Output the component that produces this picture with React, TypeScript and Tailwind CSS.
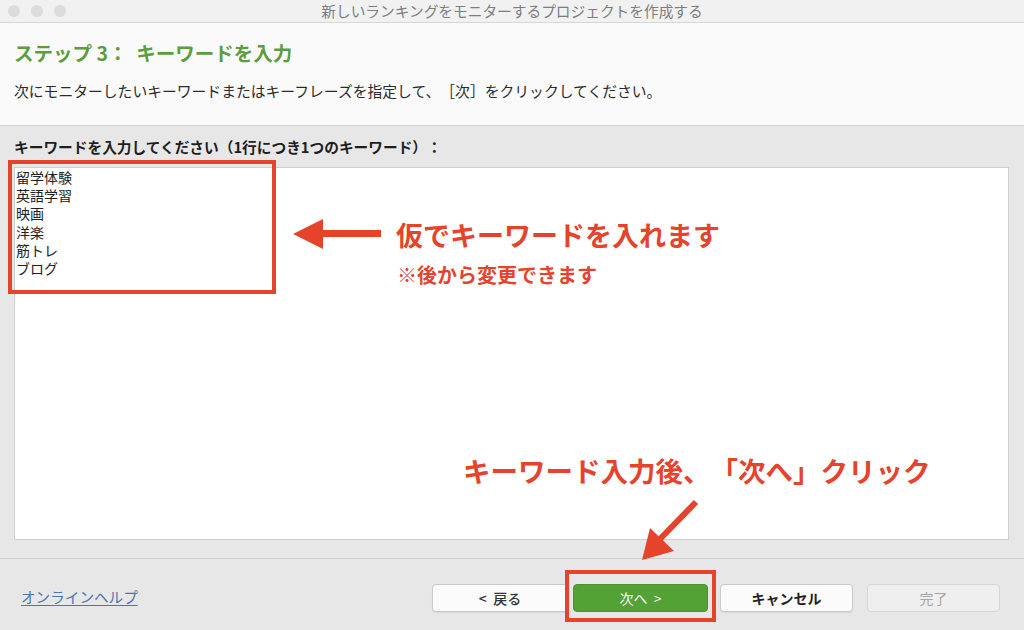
import React from "react";

const FONT = '"Noto Sans CJK JP", "Noto Sans", sans-serif';

export default function App() {
  const keywords = ["留学体験", "英語学習", "映画", "洋楽", "筋トレ", "ブログ"];
  return (
    <div
      className="relative w-[1024px] h-[630px] overflow-hidden bg-[#e7e7e7] flex flex-col text-[#222] [text-spacing-trim:space-all]"
      style={{ fontFamily: FONT }}
    >
      {/* Title bar */}
      <div className="relative h-[23px] bg-[#f1f1f1] border-b border-[#d6d6d6] flex items-center shrink-0">
        <div className="flex gap-[11px] pl-[8px]">
          <span className="w-[12px] h-[12px] rounded-full bg-[#dcdcdc]" />
          <span className="w-[12px] h-[12px] rounded-full bg-[#dcdcdc]" />
          <span className="w-[12px] h-[12px] rounded-full bg-[#dcdcdc]" />
        </div>
        <div className="absolute inset-0 flex items-center justify-center text-[14.7px] text-[#7d7d7d] leading-none">
          新しいランキングをモニターするプロジェクトを作成する
        </div>
      </div>

      {/* Header */}
      <div className="h-[103px] bg-[#fafafa] border-b border-[#d3d3d3] px-[14px] pt-[17px] shrink-0">
        <div className="text-[19.5px] font-bold leading-[26px] text-[#5c9e3c] whitespace-pre">ステップ 3：  キーワードを入力</div>
        <div className="mt-[16px] text-[14.8px] leading-[18px] text-[#2a2a2a]">
          次にモニターしたいキーワードまたはキーフレーズを指定して、［次］をクリックしてください。
        </div>
      </div>

      {/* Middle */}
      <div className="h-[432px] pl-[14px] pr-[15px] pt-[12px] shrink-0">
        <div className="text-[14.7px] font-bold leading-[18px] text-[#1e1e1e]">
          キーワードを入力してください（1行につき1つのキーワード）：
        </div>
        <div className="mt-[11px] h-[373px] bg-white border border-[#cfcfcf] px-[1px] pt-0 text-[14px] leading-[18.2px] text-[#222]">
          {keywords.map((k) => (
            <div key={k}>{k}</div>
          ))}
        </div>
      </div>

      {/* Footer */}
      <div className="flex-1 border-t border-[#cdcdcd] flex items-start pt-[25px] pl-[21px] pr-[24px]">
        <a className="mt-[3px] text-[14.6px] leading-[20px] text-[#4a76ad] underline underline-offset-2 cursor-pointer">
          オンラインヘルプ
        </a>
        <button className="ml-auto w-[136px] h-[28px] rounded-[4px] bg-[#fbfbfb] border border-[#cacaca] shadow-[0_1px_1px_rgba(0,0,0,0.08)] text-[14px] text-[#333] font-medium">
          &lt;&nbsp;&nbsp;戻る
        </button>
        <button className="ml-[5px] w-[135px] h-[28px] rounded-[4px] bg-[#53a236] border border-[#4a9330] text-[14px] text-white">
          次へ&nbsp;&nbsp;&gt;
        </button>
        <button className="ml-[12px] w-[133px] h-[28px] rounded-[4px] bg-[#fbfbfb] border border-[#cacaca] shadow-[0_1px_1px_rgba(0,0,0,0.08)] text-[14px] text-[#222] font-bold">
          キャンセル
        </button>
        <button className="ml-[14px] w-[133px] h-[28px] rounded-[4px] bg-[#efefef] border border-[#d6d6d6] text-[14px] text-[#a5a5a5]">
          完了
        </button>
      </div>

      {/* Annotations */}
      <div className="absolute left-[8px] top-[160px] w-[268px] h-[134px] border-[4px] border-[#e5432b]" />
      <div className="absolute left-[565px] top-[570px] w-[151px] h-[52px] border-[4px] border-[#e5432b]" />

      <svg className="absolute left-0 top-0 pointer-events-none" width="1024" height="630">
        <rect x="320" y="230" width="61" height="7" fill="#e5432b" />
        <polygon points="293,234 323,219 323,249" fill="#e5432b" />
        <line x1="696" y1="502" x2="660" y2="539" stroke="#e5432b" strokeWidth="6" />
        <polygon points="642,560 650,528 674,551" fill="#e5432b" />
      </svg>

      <div className="absolute left-[396px] top-[218px] text-[27px] font-bold leading-[34px] text-[#e5432b] whitespace-nowrap">
        仮でキーワードを入れます
      </div>
      <div className="absolute left-[397px] top-[262px] text-[20px] font-bold leading-[26px] text-[#e5432b] whitespace-nowrap">
        ※後から変更できます
      </div>
      <div className="absolute left-[463px] top-[453px] text-[27.5px] font-bold leading-[34px] text-[#e5432b] whitespace-nowrap">
        キーワード入力後、「次へ」クリック
      </div>
    </div>
  );
}
